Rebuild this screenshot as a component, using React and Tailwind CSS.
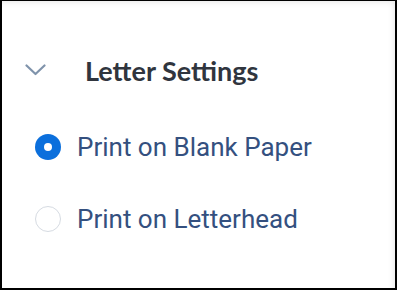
import React, { useState } from "react";

const options = [
  { id: "blank", label: "Print on Blank Paper" },
  { id: "letterhead", label: "Print on Letterhead" },
];

// Radio option row
const RadioRow = ({ label, checked, onSelect, className }) => (
  <button
    type="button"
    onClick={onSelect}
    className={`flex h-10 items-center pl-[33px] text-left ${className}`}
  >
    {checked ? (
      <span className="flex h-[26px] w-[26px] items-center justify-center rounded-full bg-[#0b6fdc]">
        <span className="h-2 w-2 rounded-full bg-white" />
      </span>
    ) : (
      <span className="h-[26px] w-[26px] rounded-full border-[1.5px] border-[#d6dbe2] bg-white" />
    )}
    <span className="ml-4 font-['Roboto',sans-serif] text-[26px] leading-[26px] text-[#34507f]">
      {label}
    </span>
  </button>
);

export default function App() {
  const [selected, setSelected] = useState("blank");

  return (
    <div className="h-[290px] w-[397px] border-x-2 border-t border-b-2 border-black bg-white">
      <div className="h-full w-full shadow-[inset_-6px_6px_6px_-5px_rgba(0,0,0,0.1)]">
        {/* Section header */}
        <div className="flex h-10 items-center pl-[23px] pt-[49px] box-content">
          <svg
            width="21"
            height="12"
            viewBox="0 0 21 12"
            fill="none"
            stroke="#7f93ab"
            strokeWidth="2.2"
            strokeLinecap="round"
            strokeLinejoin="round"
          >
            <path d="M1.5 1.5 L10.5 10 L19.5 1.5" />
          </svg>
          <h2 className="ml-[39px] font-['Lato',sans-serif] text-[27px] font-bold leading-[27px] text-[#30353e]">
            Letter Settings
          </h2>
        </div>

        {/* Options */}
        <div className="flex flex-col">
          {options.map((opt, idx) => (
            <RadioRow
              key={opt.id}
              label={opt.label}
              checked={selected === opt.id}
              onSelect={() => setSelected(opt.id)}
              className={idx === 0 ? "mt-[37px]" : "mt-8"}
            />
          ))}
        </div>
      </div>
    </div>
  );
}
